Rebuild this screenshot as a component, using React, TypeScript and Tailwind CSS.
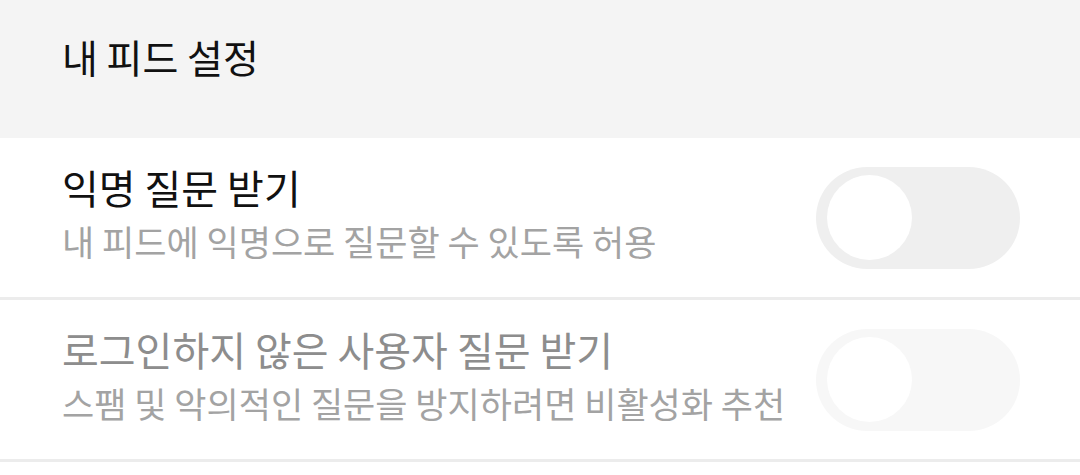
export default function App() {
  const font = { fontFamily: '"Noto Sans CJK KR", "Noto Sans", sans-serif' };
  return (
    <div className="w-[1080px] h-[475px] bg-white overflow-hidden" style={font}>
      <div className="h-[138px] bg-[#f4f4f4] flex items-center pl-[62px] pb-[26px]">
        <h1 className="text-[39px] leading-none text-[#111]">내 피드 설정</h1>
      </div>
      <SettingRow
        title="익명 질문 받기"
        desc="내 피드에 익명으로 질문할 수 있도록 허용"
        titleColor="text-[#111]"
        descColor="text-[#a3a3a3]"
        trackColor="bg-[#efefef]"
      />
      <SettingRow
        title="로그인하지 않은 사용자 질문 받기"
        desc="스팸 및 악의적인 질문을 방지하려면 비활성화 추천"
        titleColor="text-[#8d8d8d]"
        descColor="text-[#a3a3a3]"
        trackColor="bg-[#f7f7f7]"
      />
    </div>
  );
}

function SettingRow(props: {
  title: string;
  desc: string;
  titleColor: string;
  descColor: string;
  trackColor: string;
}) {
  return (
    <div className="h-[162px] flex items-center justify-between pl-[62px] pr-[60px] border-b-[3px] border-[#ececec]">
      <div className="flex flex-col gap-[12px] pb-[9px]">
        <div className={`text-[40px] leading-[44px] ${props.titleColor}`}>{props.title}</div>
        <div className={`text-[35px] leading-[40px] ${props.descColor}`}>{props.desc}</div>
      </div>
      <div className={`w-[204px] h-[102px] rounded-full ${props.trackColor} flex items-center pl-[11px]`}>
        <div className="w-[85px] h-[85px] rounded-full bg-white" />
      </div>
    </div>
  );
}
